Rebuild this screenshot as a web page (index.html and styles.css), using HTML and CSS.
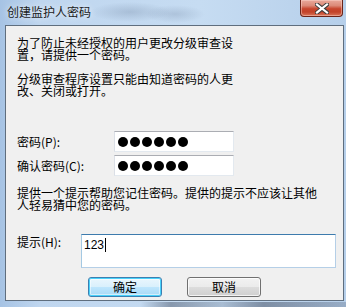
FILE: index.html
```html
<!DOCTYPE html>
<html lang="zh-CN">
<head>
<meta charset="utf-8">
<title>创建监护人密码</title>
<link rel="stylesheet" href="styles.css">
</head>
<body>
<div class="window">
  <div class="titlebar">
    <span class="title">创建监护人密码</span>
    <div class="close">
      <svg width="14" height="11" viewBox="0 0 14 11">
        <path d="M2 1.5 L12 9.5 M12 1.5 L2 9.5" stroke="#3b3b3b" stroke-width="4.2" stroke-linecap="square"/>
        <path d="M2 1.5 L12 9.5 M12 1.5 L2 9.5" stroke="#ffffff" stroke-width="2.2" stroke-linecap="square"/>
      </svg>
    </div>
  </div>
  <div class="client">
    <p class="para">为了防止未经授权的用户更改分级审查设<br>置，请提供一个密码。</p>
    <p class="para para-2">分级审查程序设置只能由知道密码的人更<br>改、关闭或打开。</p>
    <div class="fields">
      <div class="row">
        <span class="label">密码(P):</span>
        <div class="input pwd"><span class="dot"></span><span class="dot"></span><span class="dot"></span><span class="dot"></span><span class="dot"></span><span class="dot"></span></div>
      </div>
      <div class="row">
        <span class="label">确认密码(C):</span>
        <div class="input pwd"><span class="dot"></span><span class="dot"></span><span class="dot"></span><span class="dot"></span><span class="dot"></span><span class="dot"></span></div>
      </div>
    </div>
    <p class="para para-3">提供一个提示帮助您记住密码。提供的提示不应该让其他<br>人轻易猜中您的密码。</p>
    <div class="hint-row">
      <span class="label hint-label">提示(H):</span>
      <div class="hint-input"><span class="hint-text">123</span><span class="caret"></span></div>
    </div>
    <div class="buttons">
      <div class="btn btn-default">确定</div>
      <div class="btn">取消</div>
    </div>
  </div>
  <div class="bottom-glass"></div>
</div>
</body>
</html>
```
FILE: styles.css
```css
html, body {
  margin: 0;
  padding: 0;
  background: #b9d1ea;
}

.window {
  width: 346px;
  height: 307px;
  position: relative;
  overflow: hidden;
  background:
    radial-gradient(ellipse 40px 10px at 130px 12px, rgba(90,110,140,0.25), rgba(90,110,140,0) 100%),
    radial-gradient(ellipse 30px 9px at 175px 14px, rgba(90,110,140,0.22), rgba(90,110,140,0) 100%),
    linear-gradient(to right, #a6c3e4 0px, #bfd6ef 40px, #c6dcf2 200px, #b6cfea 346px);
  font-family: "Noto Sans CJK SC", "Noto Sans", sans-serif;
  font-size: 12px;
  color: #000;
}

.titlebar {
  height: 25px;
  display: flex;
  align-items: flex-start;
  justify-content: space-between;
}

.title {
  margin: 6px 0 0 7px;
  line-height: 12px;
  font-size: 12px;
  color: #1b1b1b;
  text-shadow: 0 0 6px rgba(255,255,255,0.9);
}

.close {
  width: 43px;
  height: 17px;
  margin-right: 3px;
  box-sizing: border-box;
  border: 1px solid #6b2419;
  border-top: none;
  border-radius: 0 0 4px 4px;
  background: linear-gradient(to bottom, #e9a99b 0%, #dc8a78 35%, #c7452c 55%, #c2432a 75%, #d9765a 100%);
  box-shadow: inset 0 0 0 1px rgba(255,220,210,0.45);
  display: flex;
  align-items: center;
  justify-content: center;
}

.close svg {
  display: block;
}

.client {
  margin-left: 5px;
  width: 339px;
  height: 276px;
  box-sizing: border-box;
  border: 1px solid #5f6e7e;
  background: #f0f0f0;
  padding: 11px 0 0 11px;
  display: flex;
  flex-direction: column;
  position: relative;
  z-index: 1;
}

.para {
  margin: 0;
  line-height: 12px;
  font-size: 12px;
}

.para-2 {
  margin-top: 12px;
}

.fields {
  margin-top: 34px;
  display: flex;
  flex-direction: column;
  gap: 3px;
}

.row {
  display: flex;
  align-items: center;
  height: 21px;
}

.label {
  width: 97px;
  line-height: 12px;
  font-size: 12px;
  flex: none;
}

.input {
  width: 120px;
  height: 21px;
  box-sizing: border-box;
  background: #fff;
  border: 1px solid #e2e3ea;
  border-top-color: #abadb3;
  border-left-color: #dbdfe6;
  border-right-color: #e3e9ef;
  border-bottom-color: #e3e9ef;
}

.pwd {
  display: flex;
  align-items: center;
  padding-left: 3px;
  gap: 2px;
}

.dot {
  width: 10px;
  height: 10px;
  border-radius: 50%;
  background: #000;
  flex: none;
}

.para-3 {
  margin-top: 11px;
}

.hint-row {
  margin-top: 23px;
  display: flex;
  align-items: flex-start;
}

.hint-label {
  width: 64px;
  margin-top: 2px;
}

.hint-input {
  width: 255px;
  height: 34px;
  box-sizing: border-box;
  background: #fff;
  border: 1px solid #b5cfe7;
  border-top-color: #3d7bad;
  border-left-color: #a4c9e3;
  display: flex;
  align-items: flex-start;
  padding: 3px 0 0 2px;
}

.hint-text {
  font-family: "Liberation Sans", sans-serif;
  font-size: 12px;
  line-height: 14px;
}

.caret {
  width: 1px;
  height: 14px;
  background: #000;
  margin-left: 1px;
}

.buttons {
  margin-top: 9px;
  margin-left: 71px;
  display: flex;
  gap: 25px;
}

.btn {
  width: 74px;
  height: 20px;
  box-sizing: border-box;
  border: 1px solid #707070;
  border-radius: 3px;
  background: linear-gradient(to bottom, #f2f2f2 0%, #ebebeb 49%, #dddddd 50%, #cfcfcf 100%);
  box-shadow: inset 0 0 0 1px rgba(255,255,255,0.75);
  display: flex;
  align-items: center;
  justify-content: center;
  line-height: 12px;
  font-size: 12px;
}

.btn-default {
  border-color: #3c7fb1;
  background: linear-gradient(to bottom, #eaf6fd 0%, #d9f0fc 49%, #bee6fd 50%, #a7d9f5 100%);
  box-shadow: inset 0 0 0 1px #48d2fb, inset 0 0 0 2px rgba(255,255,255,0.5);
}

.bottom-glass {
  position: absolute;
  left: 140px;
  right: 0;
  bottom: 0;
  height: 5px;
  background: linear-gradient(to right, rgba(60,70,90,0) 0%, rgba(60,70,90,0.45) 15%, rgba(60,70,90,0.2) 40%, rgba(60,70,90,0.5) 60%, rgba(60,70,90,0.25) 100%);
}
```
